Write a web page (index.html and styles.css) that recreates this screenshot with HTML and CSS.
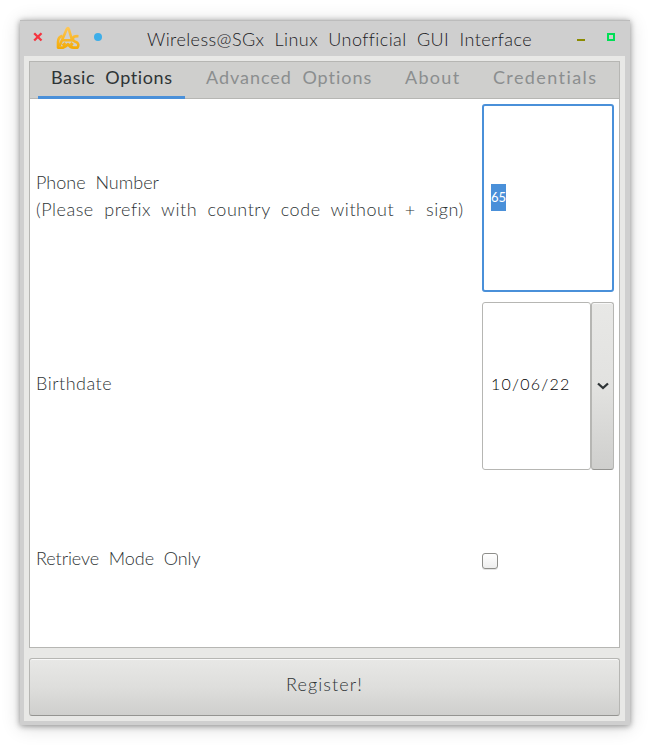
FILE: index.html
```html
<!DOCTYPE html>
<html lang="en">
<head>
<meta charset="utf-8">
<title>Wireless@SGx Linux Unofficial GUI Interface</title>
<link rel="stylesheet" href="styles.css">
</head>
<body>
<main class="window">
  <header class="titlebar">
    <svg class="icon-close" width="10" height="10" viewBox="0 0 10 10"><path d="M1.2 1.2 8.5 8.5M8.5 1.2 1.2 8.5"/></svg>
    <svg class="icon-app" width="24" height="24" viewBox="0 0 24 24">
      <defs><linearGradient id="gold" x1="0" y1="0" x2="0" y2="24" gradientUnits="userSpaceOnUse"><stop offset="0" stop-color="#ffc95c"/><stop offset="1" stop-color="#f3a900"/></linearGradient></defs>
      <path d="M3.5 20 10.8 3Q12 .8 12.8 3.2L16.5 15.5M6.5 14.2H16.5"/>
      <path d="M6.5 9.8Q2 11 2 16V21.6H7.5Q10 21 12 18Q14 21.6 17.5 21.6H21.5Q23.6 18 20.5 16.2Q16.5 15 16.8 12.5Q17.5 9.8 22.5 10.2M6.5 19.5 9.5 17M14.5 17 17 19"/>
    </svg>
    <span class="dot"></span>
    <h1 class="title">Wireless@SGx Linux Unofficial GUI Interface</h1>
    <span class="minimize"></span>
    <span class="maximize"></span>
  </header>
  <div class="content">
    <section class="notebook">
      <nav class="tabs">
        <span class="tab active"><span class="t-basic">Basic Options</span></span>
        <span class="tab"><span class="t-advanced">Advanced Options</span></span>
        <span class="tab"><span class="t-about">About</span></span>
        <span class="tab"><span class="t-credentials">Credentials</span></span>
      </nav>
      <div class="form">
        <div class="label phone"><div class="t-phone">Phone Number</div><div class="t-hint">(Please prefix with country code without + sign)</div></div>
        <div class="entry focused"><span class="selection">65</span></div>
        <div class="label"><span class="t-birth">Birthdate</span></div>
        <div class="date">
          <div class="entry"><span class="t-date">10/06/22</span></div>
          <div class="dropdown"><svg width="12" height="8" viewBox="0 0 12 8"><path d="M1 1.5 6 6 11 1.5"/></svg></div>
        </div>
        <div class="label"><span class="t-retrieve">Retrieve Mode Only</span></div>
        <span class="checkbox"></span>
      </div>
    </section>
    <div class="register"><span class="t-register">Register!</span></div>
  </div>
</main>
</body>
</html>
```
FILE: styles.css
```css
* { box-sizing: border-box; }
body {
  margin: 0;
  padding: 20px 19px 20px 20px;
  height: 745px;
  overflow: hidden;
  background: #fff;
  color: #2e3436;
  font: 300 18px/27px Lato, sans-serif;
  white-space: nowrap;
}
.window {
  width: 610px;
  height: 705px;
  padding: 0 5px 4px 4px;
  background: #cfcfcf;
  border-top: 1px solid #bcbcbc;
  box-shadow: 0 1px 6px rgba(0,0,0,.4), 0 2px 18px rgba(0,0,0,.16);
}
.titlebar { height: 35px; display: flex; }
.icon-close { margin: 11px 0 0 9px; fill: none; stroke: #f5343f; stroke-width: 2.3; }
.icon-app { margin: 5px 0 0 13px; fill: none; stroke: url(#gold); stroke-width: 2.6; stroke-linejoin: round; }
.dot { width: 8px; height: 8px; margin: 12px 0 0 14px; border-radius: 50%; background: #3daee9; }
.title { margin: 5px 0 0 45px; width: 385px; font: inherit; color: #1b2024; letter-spacing: .42px; word-spacing: 5px; }
.minimize { width: 8px; height: 2px; margin: 18px 0 0 45px; background: #8b8b00; }
.maximize { width: 8px; height: 8px; margin: 12px 0 0 22px; border: 2px solid #00df55; }
.content { height: 665px; padding: 5px; background: #e8e8e6; display: flex; flex-direction: column; gap: 10px; }
.notebook { width: 591px; height: 587px; border: 1px solid #b6b6b3; background: #fff; }
.tabs { display: flex; height: 37px; padding-left: 8px; background: #cfcfcd; border-bottom: 1px solid #b6b6b3; }
.tab { height: 37px; padding: 2px 13px 0 14px; margin-right: 6px; color: #8b8e8f; font-weight: 400; }
.tab > span { display: block; word-spacing: 5px; }
.active { padding-left: 13px; padding-right: 14px; margin-right: 7px; color: #2e3436; border-bottom: 3px solid #4a90d9; }
.t-basic { width: 120px; letter-spacing: .6px; }
.t-advanced { width: 166px; letter-spacing: .96px; }
.t-about { width: 55px; letter-spacing: 1.3px; }
.t-credentials { width: 104px; letter-spacing: 1.4px; }
.form { display: grid; grid-template-columns: 442px 132px; grid-template-rows: 188px 168px 163px; gap: 10px 5px; padding: 5px; }
.label { align-self: center; padding: 0 0 6px 1px; }
.label > * { word-spacing: 5px; }
.phone { padding-bottom: 4px; }
.t-hint { letter-spacing: .53px; }
.t-birth { letter-spacing: .5px; }
.t-retrieve { letter-spacing: -.08px; }
.entry { display: flex; align-items: center; padding-left: 8px; border: 1px solid #b6b6b3; border-radius: 3px; background: #fff; }
.focused { border: 2px solid #4a90d9; padding: 0 0 2px 7px; }
.selection { width: 15px; height: 27px; background: #4a90d9; color: #fff; font-size: 13px; font-weight: 400; line-height: 27px; }
.date { display: flex; }
.date .entry { width: 109px; padding-bottom: 5px; }
.t-date { color: #000; font-size: 16px; letter-spacing: 1.25px; }
.dropdown { width: 23px; display: flex; align-items: center; justify-content: center; border: 1px solid #b6b6b3; border-bottom-color: #949491; border-radius: 3px; background: linear-gradient(#e8e8e6, #e2e2e0 50%, #cfcfcd); box-shadow: inset 0 1px #f8f8f8; }
.dropdown svg { fill: none; stroke: #2e3436; stroke-width: 2.3; }
.checkbox { align-self: center; width: 16px; height: 16px; margin-bottom: 2px; border: 1px solid #8e8e8a; border-radius: 3px; background: linear-gradient(#fff, #eee); box-shadow: 0 1px #e4e4e4; }
.register { width: 591px; height: 58px; padding-bottom: 5px; display: flex; align-items: center; justify-content: center; border: 1px solid #b6b6b3; border-bottom-color: #949491; border-radius: 3px; background: linear-gradient(#e8e8e6, #dededc 50%, #cfcfcd); box-shadow: inset 0 1px #f8f8f8; }
.t-register { letter-spacing: 1.1px; }
```
